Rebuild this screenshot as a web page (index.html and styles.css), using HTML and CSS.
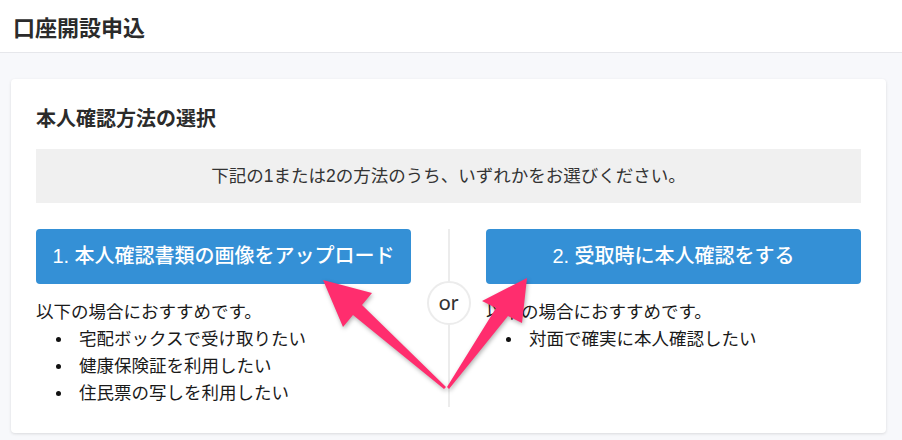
FILE: index.html
```html
<!DOCTYPE html>
<html lang="ja">
<head>
    <meta charset="UTF-8">
    <title>口座開設申込</title>
    <link rel="stylesheet" href="styles.css">
</head>
<body>
    <!--================================= header =================================-->
    <header class="page-head">
        <h1>口座開設申込</h1>
    </header>
    <!--================================= main =================================-->
    <main class="page-body">
        <section class="card">
            <h2>本人確認方法の選択</h2>
            <p class="notice">下記の1または2の方法のうち、いずれかをお選びください。</p>
            <div class="choices">
                <div class="choice">
                    <a class="btn" href="#">1. 本人確認書類の画像をアップロード</a>
                    <p>以下の場合におすすめです。</p>
                    <ul>
                        <li>宅配ボックスで受け取りたい</li>
                        <li>健康保険証を利用したい</li>
                        <li>住民票の写しを利用したい</li>
                    </ul>
                </div>
                <div class="divider"><span class="or">or</span></div>
                <div class="choice">
                    <a class="btn" href="#">2. 受取時に本人確認をする</a>
                    <p>以下の場合におすすめです。</p>
                    <ul>
                        <li>対面で確実に本人確認したい</li>
                    </ul>
                </div>
            </div>
        </section>
    </main>
    <!-- 注釈の矢印 -->
    <svg class="marks" width="902" height="440" viewBox="0 0 902 440">
        <polygon points="323,280 372,293 362,305 446,387 444,389 353,315 343,327"/>
        <polygon points="527,278 522,323 508,316 449,389 447,387 496,308 482,301"/>
    </svg>
</body>
</html>
```

FILE: styles.css
```css
* { box-sizing: border-box; }
body { margin: 0; background: #f7f8fb; color: #222; font-family: "Liberation Sans", "Noto Sans CJK JP", sans-serif; position: relative; }
h1, h2, p, ul { margin: 0; }
/*================================= header =================================*/
.page-head { height: 53px; background: #fff; border-bottom: 1px solid #e6e7eb; display: flex; align-items: center; padding: 6px 13px 0; }
.page-head h1 { font-size: 22px; font-weight: bold; color: #2b2b2b; line-height: 30px; }
/*================================= card =================================*/
.page-body { padding: 26px 16px 7px 11px; }
.card { background: #fff; border-radius: 4px; box-shadow: 0 1px 3px rgba(0, 0, 0, .12); padding: 25px 25px 26px; }
.card h2 { font-size: 20px; font-weight: bold; color: #2b2b2b; line-height: 30px; margin-bottom: 15px; }
.notice { background: #f0f0f0; text-align: center; font-size: 17.5px; line-height: 24px; padding: 15px 0; color: #333; margin-bottom: 26px; }
/*===========選択肢===========*/
.choices { display: grid; grid-template-columns: 1fr 75px 1fr; }
.btn { display: block; height: 55px; line-height: 55px; background: #3490d6; color: #fff; text-align: center; text-decoration: none; border-radius: 4px; font-size: 20px; font-weight: 500; margin-bottom: 15px; }
.choice p, .choice li { font-size: 17.5px; line-height: 27px; color: #1a1a1a; }
.choice ul { list-style: none; padding-left: 20px; }
.choice li { display: flex; align-items: center; }
.choice li::before { content: ""; width: 5px; height: 5px; border-radius: 50%; background: #111; margin-right: 18px; flex: none; }
/*===========区切り線===========*/
.divider { position: relative; display: flex; justify-content: center; }
.divider::before { content: ""; width: 2px; background: #ececec; }
.or { position: absolute; top: 52px; left: 50%; margin-left: -22px; width: 44px; height: 44px; border: 2px solid #ececec; border-radius: 50%; background: #fff; display: flex; align-items: center; justify-content: center; font-family: "Lato", sans-serif; font-size: 21px; color: #333; padding-bottom: 3px; }
/*===========矢印===========*/
.marks { position: absolute; top: 0; left: 0; pointer-events: none; }
.marks polygon { fill: #ff2d6e; filter: drop-shadow(1px 2px 2px rgba(0, 0, 0, .3)); }
```
